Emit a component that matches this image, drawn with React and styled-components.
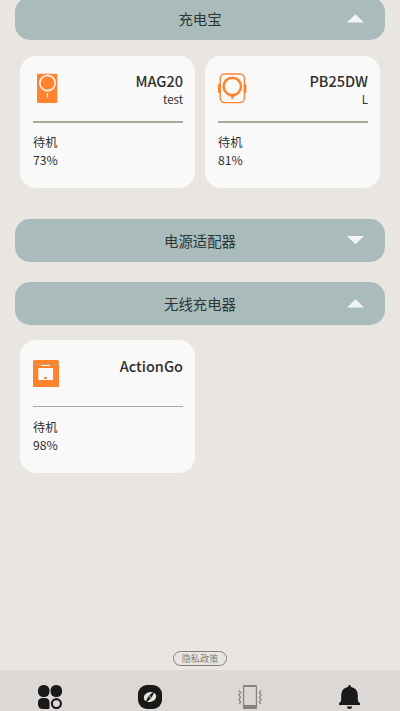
import React from 'react';
import styled, { createGlobalStyle } from 'styled-components';

const GlobalStyle = createGlobalStyle`
  * {
    box-sizing: border-box;
  }

  body {
    margin: 0;
    background: #e9e6e1;
    color: #303030;
    font-family: 'Noto Sans CJK SC', 'Noto Sans', sans-serif;
  }
`;

const Screen = styled.div`
  height: 711px;
  overflow: hidden;
  display: flex;
  flex-direction: column;
`;

const Content = styled.main`
  flex: 1;
  min-height: 0;
  padding: 0 15px;
  margin-top: -3px;
`;

const SectionHeader = styled.button`
  display: grid;
  grid-template-columns: 1fr auto 1fr;
  align-items: center;
  width: 100%;
  height: 43px;
  padding: 0 21px;
  border: 0;
  border-radius: 15px;
  background: #a9bbba;
  color: #2d3535;
  font-family: inherit;
  font-size: 14.4px;
  line-height: 20px;
`;

const SectionTitle = styled.span`
  grid-column: 2;
`;

const Arrow = styled.svg`
  justify-self: end;
  width: 17px;
  height: 8.5px;
  margin-top: ${(props) => (props.$open ? '0' : '-1px')};
  fill: #f3f5f4;
`;

const Cards = styled.div`
  display: grid;
  grid-template-columns: 175px 175px;
  gap: 10px;
  padding: ${(props) => props.$padding};
`;

const Card = styled.article`
  height: ${(props) => props.$height}px;
  padding: 17px 12px 0 13px;
  border-radius: 16px;
  background: #f9f9f9;
`;

const CardTop = styled.div`
  display: flex;
  justify-content: space-between;
  height: ${(props) => props.$height}px;
`;

const DeviceIcon = styled.svg`
  display: block;
  width: 30px;
  height: 32px;
`;

const Labels = styled.div`
  text-align: right;
`;

const Name = styled.div`
  margin-top: ${(props) => (props.$raised ? '-1px' : '0')};
  font-size: 14.5px;
  font-weight: 500;
  line-height: 18px;
`;

const Note = styled.div`
  font-size: 11.5px;
  line-height: 18px;
`;

const Divider = styled.div`
  height: ${(props) => props.$size}px;
  margin-bottom: ${(props) => (props.$size === 1 ? 11 : 10)}px;
  background: #a7aa98;
`;

const Status = styled.div`
  font-size: 12.2px;
  line-height: 18px;
`;

const Policy = styled.a`
  align-self: center;
  display: flex;
  align-items: center;
  justify-content: center;
  width: 54px;
  height: 15px;
  margin-bottom: 4px;
  border: 1px solid #817e7a;
  border-radius: 8px;
  color: #817e7a;
  font-size: 9.2px;
  line-height: 13px;
`;

const TabBar = styled.nav`
  display: grid;
  grid-template-columns: repeat(4, 1fr);
  justify-items: center;
  height: 41px;
  padding-top: 15px;
  background: #dcd8d5;
`;

const TabIcon = styled.svg`
  width: 24px;
  height: 24px;
`;

const Spacer = styled.div`
  height: 20px;
`;

const orange = '#ff822d';

const MagIcon = () => (
  <DeviceIcon viewBox="0 0 30 32">
    <rect x="4" y="0.7" width="20.3" height="29.3" rx="1.2" fill={orange} />
    <circle cx="14.5" cy="10" r="7.7" fill="none" stroke="#fff3e8" strokeWidth="1.7" />
    <path d="M14.5 20v4.5" stroke="#fff3e8" strokeWidth="1.2" />
  </DeviceIcon>
);

const PowerBankIcon = () => (
  <DeviceIcon viewBox="0 0 30 32">
    <rect x="2.2" y="1" width="24.2" height="28.6" rx="4.5" fill="none" stroke={orange} strokeWidth="1.4" />
    <rect x="0" y="11" width="2.5" height="9" rx="0.7" fill={orange} />
    <rect x="25.9" y="11" width="2.5" height="9" rx="0.7" fill={orange} />
    <circle cx="14.3" cy="13.4" r="8.7" fill="none" stroke={orange} strokeWidth="2.5" />
    <path d="M14.3 22v4" stroke={orange} strokeWidth="2" />
    <path d="M11.5 22.8h5.6" stroke={orange} strokeWidth="1.4" />
  </DeviceIcon>
);

const ChargerIcon = () => (
  <DeviceIcon viewBox="0 0 30 32">
    <path d="M1.5 3h23Q26 3 26 5v25H0V5Q0 3 1.5 3Z" fill={orange} />
    <path d="M0 7.5h26" stroke="#c1a27b" strokeWidth="1" />
    <path d="M8 8.5h9" stroke="#fff3e8" strokeWidth="1" />
    <rect x="5.3" y="11" width="14.7" height="12" rx="0.5" fill="#faf9f8" />
    <rect x="11" y="20" width="3" height="2" fill="#df9b60" />
  </DeviceIcon>
);

const Section = ({ title, open }) => (
  <SectionHeader type="button">
    <SectionTitle>{title}</SectionTitle>
    <Arrow $open={open} viewBox="0 0 17 9" preserveAspectRatio="none">
      <path
        d={
          open
            ? 'M0 9Q0 8.3 1.5 7.3L7.7 1Q8.5 0 9.3 1L15.5 7.3Q17 8.3 17 9Z'
            : 'M0 0Q0 .7 1.5 1.7L7.7 8Q8.5 9 9.3 8L15.5 1.7Q17 .7 17 0Z'
        }
      />
    </Arrow>
  </SectionHeader>
);

const Device = ({ icon, name, note, level, height = 132, line = 2 }) => (
  <Card $height={height}>
    <CardTop $height={line === 1 ? 49 : 48}>
      {icon}
      <Labels>
        <Name $raised={Boolean(note)}>{name}</Name>
        {note && <Note>{note}</Note>}
      </Labels>
    </CardTop>
    <Divider $size={line} />
    <Status>待机</Status>
    <Status>{level}%</Status>
  </Card>
);

const App = () => (
  <>
    <GlobalStyle />
    <Screen>
      <Content>
        <Section title="充电宝" open />
        <Cards $padding="16px 5px 31px">
          <Device icon={<MagIcon />} name="MAG20" note="test" level={73} />
          <Device icon={<PowerBankIcon />} name="PB25DW" note="L" level={81} />
        </Cards>
        <Section title="电源适配器" />
        <Spacer />
        <Section title="无线充电器" open />
        <Cards $padding="15px 5px 0">
          <Device icon={<ChargerIcon />} name="ActionGo" level={98} height={133} line={1} />
        </Cards>
      </Content>
      <Policy>隐私政策</Policy>
      <TabBar>
        <TabIcon viewBox="0 0 24 24" fill="#191919">
          <rect x="0" y="0" width="11.5" height="12" rx="5.3" />
          <rect x="12.6" y="0" width="11.4" height="12" rx="5.3" />
          <path d="M5 13h1.7q4.8 0 4.8 4.8v4.7q0 1.5-1.5 1.5H5Q0 24 0 19v-1.5Q0 13 5 13Z" />
          <circle cx="18.4" cy="18.6" r="4.5" fill="none" stroke="#191919" strokeWidth="2.1" />
        </TabIcon>
        <TabIcon viewBox="0 0 24 24">
          <rect width="24" height="24" rx="9" fill="#191919" />
          <ellipse cx="12" cy="12" rx="6.3" ry="5" fill="#e8e5df" transform="rotate(-15 12 12)" />
          <path d="M8 17.5Q8.5 11.5 16 6.5 15.5 12.5 8 17.500Z" fill="#191919" />
          <circle cx="12" cy="12" r="0.8" fill="#e8e5df" />
        </TabIcon>
        <TabIcon viewBox="0 0 24 24" fill="none" stroke="#85817d">
          <rect x="5.6" y="0.7" width="12.8" height="22.6" rx="1" strokeWidth="1.3" />
          <path d="M5 20h14v3q0 1-1 1H6q-1 0-1-1Z" fill="#85817d" stroke="none" />
          <path d="M5 1.1h14" strokeWidth="1.6" />
          <path
            d="M.8 5.3 2.6 7.5.8 10l1.8 2.3-1.8 2.3 1.8 2.3-1.2 2M23.2 5.3l-1.8 2.2 1.8 2.5-1.8 2.3 1.8 2.3-1.8 2.3 1.2 2"
            strokeWidth="1.2"
          />
        </TabIcon>
        <TabIcon viewBox="0 0 24 24" fill="#191919">
          <path d="M11.500 0q1.500 0 1.500 2 6.500 1.200 6.800 8v5q0 2 2.200 3.200V20H1v-1.800Q3.200 17 3.200 15v-5Q3.500 3.200 10 2 10 0 11.500 0Z" />
          <path d="M8.800 21.500h5.500Q14 24 11.500 24T8.800 21.500Z" />
        </TabIcon>
      </TabBar>
    </Screen>
  </>
);

export default App;
